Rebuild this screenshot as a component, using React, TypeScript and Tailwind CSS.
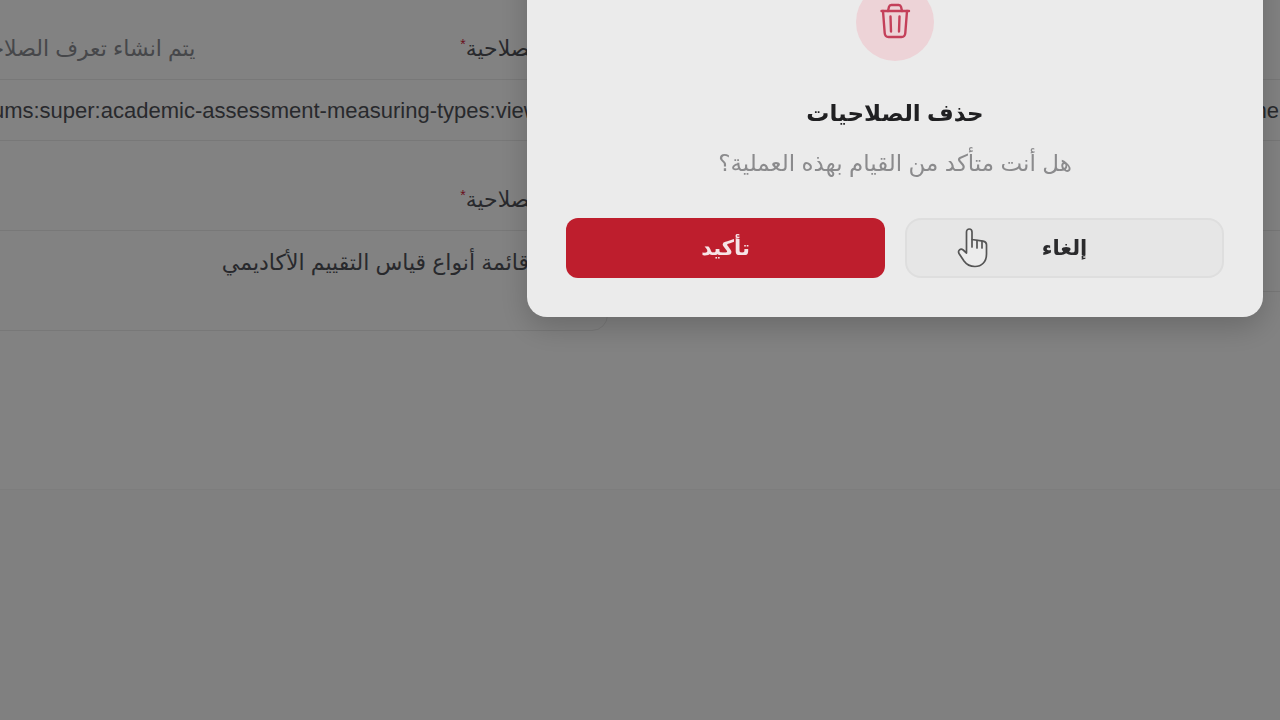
import type { ReactNode } from 'react'

const fieldBox =
  'block w-full rounded-2xl border border-[#ebebeb] bg-transparent px-5 text-[22px] leading-7 text-[#505258] outline-none'

export default function App() {
  return (
    <div
      dir="rtl"
      className="min-h-screen overflow-hidden bg-[#fbfbfb] font-['Liberation_Sans','DejaVu_Sans',sans-serif]"
    >
      <PermissionForm />
      <DeleteDialog />
    </div>
  )
}

function PermissionForm() {
  return (
    <main className="border-b border-[#f6f6f6] bg-white pt-8 pb-[158px]">
      <form className="-mr-5 -ml-15 grid grid-cols-2 gap-6">
        <div className="flex flex-col gap-[42px]">
          <Field id="name-en" label="الاسم" labelPadding="pr-10">
            <input id="name-en" className={`${fieldBox} h-[62px] pt-0.5`} defaultValue="name" />
          </Field>
          <Field id="group" label="المجموعة" labelPadding="pr-10">
            <input id="group" className={`${fieldBox} h-[62px] pt-0.5`} />
          </Field>
        </div>
        <div className="flex flex-col gap-[42px]">
          <Field id="key" label="اسم الصلاحية" hint="يتم انشاء تعرف الصلاحية">
            <input
              id="key"
              className={`${fieldBox} h-[62px] pt-0.5 pr-[38px]`}
              defaultValue="ums:super:academic-assessment-measuring-types:view-all"
            />
          </Field>
          <Field id="description" label="اسم الصلاحية">
            <textarea
              id="description"
              className={`${fieldBox} h-[101px] resize-none py-[18px]`}
              defaultValue="عرض قائمة أنواع قياس التقييم الأكاديمي"
            />
          </Field>
        </div>
      </form>
    </main>
  )
}

type FieldProps = { id: string; label: string; hint?: string; labelPadding?: string; children: ReactNode }

function Field({ id, label, hint, labelPadding = 'pr-5', children }: FieldProps) {
  return (
    <div>
      <div
        className={`mb-[15px] flex h-8 items-center justify-between pl-8 text-[22px] whitespace-nowrap ${labelPadding}`}
      >
        <label htmlFor={id} className="text-[#505258]">
          {label}
          <sup className="text-[14px] text-[#d0213c]">*</sup>
        </label>
        {hint && <span className="text-[#8a8c91]">{hint}</span>}
      </div>
      {children}
    </div>
  )
}

function DeleteDialog() {
  return (
    <div className="fixed inset-0 flex items-start justify-start bg-black/49 pr-[17px]">
      <div
        role="dialog"
        aria-modal="true"
        aria-labelledby="dialog-title"
        className="-mt-[57px] flex w-full max-w-[736px] flex-col items-center rounded-[20px] bg-[#ebebeb] px-[39px] pt-10 pb-[39px] shadow-[0_10px_30px_rgba(0,0,0,0.2)]"
      >
        <div className="flex size-[78px] items-center justify-center rounded-full bg-[#edd3d7]">
          <TrashIcon />
        </div>
        <h2 id="dialog-title" className="mt-9 text-[23px] leading-8 font-bold text-[#202022]">
          حذف الصلاحيات
        </h2>
        <p className="mt-[18px] text-[23px] leading-8 text-[#8b8b8d]">هل أنت متأكد من القيام بهذه العملية؟</p>
        <div className="mt-[39px] grid w-full grid-cols-2 gap-5">
          <button
            type="button"
            className="relative h-[60px] rounded-2xl border-2 border-[#dedede] bg-[#e6e6e6] text-[21px] font-bold text-[#2b2b2d]"
          >
            إلغاء
            <HandCursor />
          </button>
          <button type="button" className="h-[60px] rounded-xl bg-[#be1e2d] text-[21px] font-bold text-[#f6e4e6]">
            تأكيد
          </button>
        </div>
      </div>
    </div>
  )
}

function TrashIcon() {
  return (
    <svg
      viewBox="0 0 32 38"
      className="h-[38px] w-8"
      fill="none"
      stroke="#c4405a"
      strokeWidth="2.4"
      strokeLinecap="round"
      strokeLinejoin="round"
    >
      <path d="M2.500 8h27.500" />
      <path d="M9 8l1-4.200q.5-1.800 2.300-1.800h7.400q1.800 0 2.300 1.800l1 4.200" />
      <path d="M4 8l1.700 22q.3 4 3.800 4h13q3.500 0 3.800-4L28 8" />
      <path d="M11.500 13.500l.5 15M20.500 13.500l-.5 15" />
    </svg>
  )
}

function HandCursor() {
  return (
    <svg
      viewBox="0 0 32 42"
      className="absolute top-2 left-[50px] h-[42px] w-8"
      fill="#ececec"
      stroke="#555555"
      strokeWidth="1.700"
      strokeLinejoin="round"
      strokeLinecap="round"
    >
      <path d="M9.500 24V4c0-4 5.500-4 5.500 0v7.500l11 1.700q3.500.7 3.500 3.500V26c0 8-5 12.500-11.500 12.500-5 0-8.500-2-11-5.500l-5-7.500c-1.500-3 1.500-5.500 4.200-3.500L9.500 25z" />
      <path d="M15 11.500V19M20 12.500V20M25 13.300V20" fill="none" />
    </svg>
  )
}
